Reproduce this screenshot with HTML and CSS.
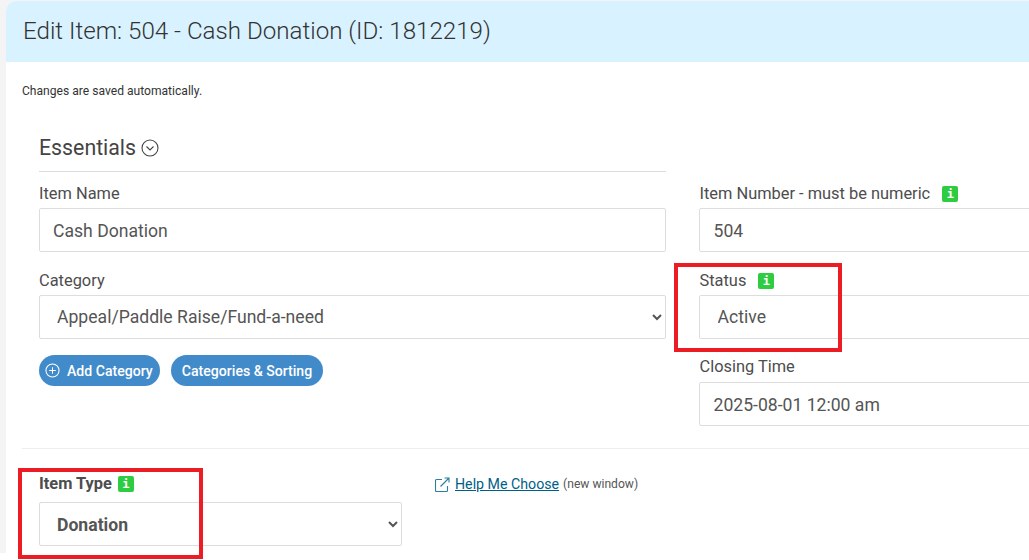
FILE: index.html
```html
<!DOCTYPE html>
<html lang="en">
<head>
  <meta charset="UTF-8" />
  <meta name="viewport" content="width=device-width, initial-scale=1.0" />
  <title>Edit Item</title>
  <link rel="stylesheet" href="styles.css">
</head>
<body>
  <div class="page">
    <div class="card">
      <h1 class="card-title">Edit Item: 504 - Cash Donation (ID: 1812219)</h1>
      <div class="card-body">
        <p class="note">Changes are saved automatically.</p>

        <div class="essentials">
          <div class="essentials-left">
            <h2 class="section-title">
              Essentials
              <svg class="chevron-icon" viewBox="0 0 18 18" width="18" height="18" fill="none" stroke="currentColor" stroke-width="1.1">
                <circle cx="9" cy="9" r="8"></circle>
                <path d="M5.5 7.5 9 11l3.5-3.5"></path>
              </svg>
            </h2>

            <label class="field-label">Item Name</label>
            <input class="field-input" type="text" value="Cash Donation" />

            <label class="field-label">Category</label>
            <select class="field-input field-select">
              <option>Appeal/Paddle Raise/Fund-a-need</option>
            </select>

            <div class="btn-row">
              <a class="btn">
                <svg viewBox="0 0 16 16" width="15" height="15" fill="none" stroke="currentColor" stroke-width="1.1">
                  <circle cx="8" cy="8" r="7"></circle>
                  <path d="M8 4.5v7M4.5 8h7"></path>
                </svg>
                Add Category
              </a>
              <a class="btn btn-plain">Categories &amp; Sorting</a>
            </div>
          </div>

          <div class="essentials-right">
            <label class="field-label">Item Number - must be numeric <span class="info info-wide">i</span></label>
            <input class="field-input" type="text" value="504" />

            <label class="field-label">Status <span class="info info-wide">i</span></label>
            <select class="field-input field-select">
              <option>Active</option>
            </select>

            <label class="field-label field-label-tight">Closing Time</label>
            <input class="field-input" type="text" value="2025-08-01 12:00 am" />
          </div>
        </div>

        <hr class="divider" />

        <div class="type-row">
          <div class="type-field">
            <label class="field-label field-label-bold">Item Type <span class="info">i</span></label>
            <select class="field-input field-select field-select-bold">
              <option>Donation</option>
            </select>
          </div>
          <div class="help">
            <svg class="help-icon" viewBox="0 0 15 15" width="15" height="15" fill="none" stroke="#2b7f9e" stroke-width="1.1">
              <path d="M7 2.5H1.5a1 1 0 0 0-1 1v10a1 1 0 0 0 1 1h10a1 1 0 0 0 1-1V9"></path>
              <path d="M5.5 9.5 13.5 1.5M9.5 1h4.5v4.5"></path>
            </svg>
            <a class="help-link">Help Me Choose</a>
            <span class="help-note">(new window)</span>
          </div>
        </div>
      </div>
    </div>
  </div>

  <!-- red callouts over the screenshot -->
  <div class="callout callout-status"></div>
  <div class="callout callout-type"></div>
</body>
</html>
```

FILE: styles.css
```css
html, body {
  margin: 0;
  height: 560px;
  overflow: hidden;
  background: #fff;
}
body {
  position: relative;
  font-family: Roboto, "Liberation Sans", sans-serif;
  color: #4d4d4d;
}
.page {
  height: 552px;
  padding: 1px 0 0 6px;
  overflow: hidden;
  background: #f4f4f4;
}
.card {
  height: 552px;
  background: #fff;
  border-top-left-radius: 10px;
  overflow: hidden;
}
.card-title {
  margin: 0;
  height: 61px;
  padding-left: 17px;
  background: #d9f2ff;
  font-size: 24.15px;
  font-weight: 300;
  line-height: 60px;
  color: #333;
}
.card-body {
  padding: 0 0 0 16px;
}
.note {
  margin: 0;
  padding-top: 22px;
  font-size: 12.1px;
  line-height: 14px;
  color: #333;
}
.essentials {
  display: grid;
  grid-template-columns: 627px 400px;
  column-gap: 33px;
  padding: 0 0 0 17px;
}
.section-title {
  display: flex;
  align-items: center;
  gap: 5px;
  margin: 31px 0 0;
  height: 33px;
  padding: 2px 0 7px;
  border-bottom: 1px solid #ddd;
  font-size: 21.3px;
  font-weight: 400;
  line-height: 30px;
  color: #444;
}
.field-label {
  display: block;
  height: 20px;
  margin-bottom: 4px;
  font-size: 16.4px;
  line-height: 20px;
  color: #4d4d4d;
}
.section-title + .field-label {
  margin-top: 12px;
}
.field-input + .field-label {
  margin-top: 19px;
}
.essentials-right {
  padding-top: 86px;
}
.essentials-right .field-label {
  padding-left: 0.5px;
}
.essentials-right .field-input {
  padding-left: 13.5px;
}
.field-input + .field-label-tight {
  margin-top: 18px;
  margin-bottom: 5px;
}
.field-input {
  display: block;
  box-sizing: border-box;
  width: 100%;
  height: 44px;
  padding: 2px 13px 0;
  border: 1px solid #ddd;
  border-radius: 2px;
  background: #fff;
  font-family: inherit;
  font-size: 17.6px;
  color: #555;
}
.field-select {
  padding-top: 0;
}
.btn-row {
  display: flex;
  gap: 11px;
  margin-top: 16px;
}
.btn {
  display: flex;
  align-items: center;
  gap: 7px;
  height: 31px;
  padding: 0 7px 0 6px;
  border-radius: 16px;
  background: #428bca;
  font-size: 14.1px;
  font-weight: 500;
  color: #fff;
}
.btn-plain {
  padding: 0 11px;
}
.info {
  display: inline-block;
  width: 16px;
  height: 16px;
  margin-left: 2px;
  border-radius: 2px;
  background: #2ecc40;
  font-family: "DejaVu Sans Mono", monospace;
  font-size: 12px;
  font-weight: 700;
  line-height: 16px;
  text-align: center;
  color: #fff;
  vertical-align: 1px;
}
.info-wide {
  margin-left: 8px;
}
.divider {
  height: 1px;
  margin: 22px 0 0;
  border: 0;
  background: #eee;
}
.type-row {
  display: flex;
  padding: 25px 0 0 17px;
}
.type-field {
  width: 363px;
}
.field-label-bold {
  margin-bottom: 8px;
  font-weight: 700;
}
.field-select-bold {
  padding-top: 2px;
  font-weight: 700;
}
.help {
  display: flex;
  align-items: center;
  gap: 5px;
  height: 20px;
  margin-left: 33px;
}
.help-link {
  font-size: 14.2px;
  color: #005f86;
  text-decoration: underline;
}
.help-note {
  margin-left: -1px;
  font-size: 12.1px;
  color: #555;
}
.callout {
  position: absolute;
  box-sizing: border-box;
  border: 4px solid #ec1c24;
}
.callout-status {
  left: 674px;
  top: 263px;
  width: 168px;
  height: 89px;
}
.callout-type {
  left: 18px;
  top: 468px;
  width: 185px;
  height: 91px;
}
```
